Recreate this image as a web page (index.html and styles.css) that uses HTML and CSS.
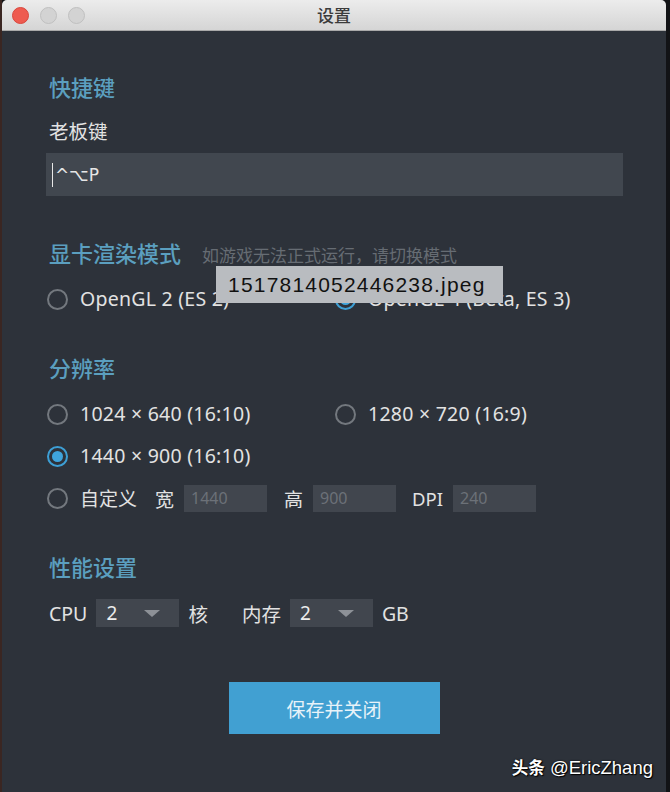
FILE: index.html
```html
<!DOCTYPE html>
<html lang="zh-CN">
<head>
<meta charset="utf-8">
<title>设置</title>
<link rel="stylesheet" href="styles.css">
</head>
<body>
<div class="window">
  <div class="titlebar">
    <div class="lights">
      <span class="light red"></span>
      <span class="light gray"></span>
      <span class="light gray"></span>
    </div>
    <div class="title">设置</div>
    <div></div>
  </div>

  <div class="content">
    <section class="section first">
      <h2 class="section-title">快捷键</h2>
      <div class="field-label">老板键</div>
      <div class="hotkey"><span class="caret"></span><span class="hotkey-text">^⌥P</span></div>
    </section>

    <section class="section render">
      <h2 class="section-title">显卡渲染模式<span class="hint">如游戏无法正式运行，请切换模式</span></h2>
      <div class="radio-grid lead">
        <div class="option"><span class="radio"></span><span class="opt-text">OpenGL 2 (ES 2)</span></div>
        <div class="option"><span class="radio checked"></span><span class="opt-text">OpenGL 4 (Beta, ES 3)</span></div>
      </div>
    </section>

    <section class="section">
      <h2 class="section-title">分辨率</h2>
      <div class="radio-grid lead">
        <div class="option"><span class="radio"></span><span class="opt-text">1024 × 640 (16:10)</span></div>
        <div class="option"><span class="radio"></span><span class="opt-text">1280 × 720 (16:9)</span></div>
      </div>
      <div class="radio-grid">
        <div class="option"><span class="radio checked"></span><span class="opt-text">1440 × 900 (16:10)</span></div>
      </div>
      <div class="custom-row">
        <span class="radio"></span>
        <span class="opt-text cjk">自定义</span>
        <span class="mini-label w">宽</span>
        <span class="num-input">1440</span>
        <span class="mini-label">高</span>
        <span class="num-input">900</span>
        <span class="mini-label dpi">DPI</span>
        <span class="num-input">240</span>
      </div>
    </section>

    <section class="section perf">
      <h2 class="section-title">性能设置</h2>
      <div class="perf-row">
        <span class="perf-label cpu">CPU</span>
        <span class="select"><span class="select-val">2</span><span class="arrow"></span></span>
        <span class="perf-label core">核</span>
        <span class="perf-label mem">内存</span>
        <span class="select"><span class="select-val">2</span><span class="arrow"></span></span>
        <span class="perf-label">GB</span>
      </div>
    </section>

    <div class="actions">
      <button class="save">保存并关闭</button>
    </div>
  </div>

  <div class="tooltip">1517814052446238.jpeg</div>
  <div class="watermark"><b>头条</b> @EricZhang</div>
</div>
</body>
</html>
```

FILE: styles.css
```css
* { box-sizing: border-box; }

html, body {
  margin: 0;
  padding: 0;
}

body {
  width: 670px;
  height: 792px;
  overflow: hidden;
  background: linear-gradient(90deg, #3a2622 0, #3a2622 2px, #121316 2px);
  font-family: "Noto Sans", "Noto Sans CJK SC", sans-serif;
}

.window {
  position: relative;
  margin-left: 2px;
  width: 664px;
  height: 792px;
  background: #2d323a;
  border-radius: 5px 5px 0 0;
  overflow: hidden;
}

.titlebar {
  height: 31px;
  display: grid;
  grid-template-columns: 1fr auto 1fr;
  align-items: center;
  background: linear-gradient(#ececec, #d5d5d5);
  border-bottom: 1px solid #a9a9a9;
}

.lights {
  display: flex;
  gap: 11px;
  padding-left: 10px;
}

.light {
  width: 17px;
  height: 17px;
  border-radius: 50%;
}

.light.red {
  background: #ee5b50;
  border: 1px solid #d9473d;
}

.light.gray {
  background: #d3d3d3;
  border: 1px solid #c0c0c0;
}

.title {
  font-family: "Noto Sans CJK SC", sans-serif;
  font-size: 17px;
  font-weight: 500;
  color: #3b3b3b;
  line-height: 20px;
}

.content {
  padding: 41px 44px 0 44px;
}

.section {
  margin-top: 41px;
}

.section.first {
  margin-top: 0;
}

.section.render {
  margin-top: 42px;
}

.section.perf {
  margin-top: 40px;
}

.section-title {
  margin: 0 0 0 3px;
  height: 28px;
  display: flex;
  align-items: baseline;
  font-family: "Noto Sans CJK SC", sans-serif;
  font-size: 22px;
  line-height: 28px;
  font-weight: 500;
  color: #5b9fbf;
}

.hint {
  margin-left: 21px;
  font-size: 17px;
  line-height: 28px;
  font-weight: 400;
  color: #666c73;
}

.field-label {
  margin: 18px 0 0 3px;
  font-family: "Noto Sans CJK SC", sans-serif;
  font-size: 19.5px;
  line-height: 26px;
  color: #e3e3e3;
}

.hotkey {
  margin-top: 9px;
  width: 577px;
  height: 43px;
  background: #41474f;
  display: flex;
  align-items: center;
  padding-left: 6px;
}

.caret {
  width: 1px;
  height: 24px;
  background: #e8e8e8;
  margin-right: 2px;
}

.hotkey-text {
  font-family: "DejaVu Sans", sans-serif;
  font-size: 17px;
  color: #e6e6e6;
}

.radio-grid {
  display: grid;
  grid-template-columns: 288px 1fr;
  margin-top: 16px;
  height: 26px;
}

.radio-grid.lead {
  margin-top: 20px;
}

.option {
  display: flex;
  align-items: center;
}

.radio {
  flex: none;
  width: 21px;
  height: 21px;
  margin-left: 1px;
  border: 2px solid #73787e;
  border-radius: 50%;
  display: flex;
  align-items: center;
  justify-content: center;
}

.radio.checked {
  border-color: #3d9fd5;
}

.radio.checked::after {
  content: "";
  width: 11px;
  height: 11px;
  border-radius: 50%;
  background: #3fa4dc;
}

.opt-text {
  margin-left: 12px;
  font-size: 19.5px;
  letter-spacing: 0.25px;
  line-height: 26px;
  color: #e2e2e2;
  white-space: nowrap;
}

.opt-text.cjk {
  font-family: "Noto Sans CJK SC", sans-serif;
  font-size: 19px;
  letter-spacing: 0;
}

.custom-row {
  margin-top: 15px;
  display: flex;
  align-items: center;
  height: 28px;
}

.mini-label {
  margin-left: 17px;
  font-family: "Noto Sans CJK SC", sans-serif;
  font-size: 19px;
  color: #e2e2e2;
}

.mini-label.w {
  margin-left: 18px;
}

.mini-label.dpi {
  font-family: "Noto Sans", sans-serif;
  font-size: 18.5px;
  margin-left: 16px;
}

.num-input {
  margin-left: 10px;
  width: 83px;
  height: 27px;
  background: #41464e;
  color: #6c7178;
  font-size: 16px;
  line-height: 27px;
  padding-left: 7px;
}

.perf-row {
  margin-top: 19px;
  display: flex;
  align-items: center;
  height: 28px;
}

.perf-label {
  margin-left: 9px;
  font-size: 19.5px;
  color: #e2e2e2;
  font-family: "Noto Sans", "Noto Sans CJK SC", sans-serif;
}

.perf-label.cpu {
  margin-left: 3px;
}

.perf-label.mem {
  margin-left: 34px;
}

.select {
  margin-left: 9px;
  width: 83px;
  height: 28px;
  background: #41464e;
  display: flex;
  align-items: center;
  padding-left: 10px;
}

.select-val {
  font-size: 19px;
  color: #ececec;
  width: 38px;
}

.arrow {
  width: 0;
  height: 0;
  border-left: 8px solid transparent;
  border-right: 8px solid transparent;
  border-top: 7px solid #8d9197;
}

.actions {
  margin-top: 55px;
  display: flex;
  justify-content: center;
}

.save {
  width: 211px;
  height: 52px;
  border: none;
  background: #41a0d2;
  color: #e8f3f9;
  font-family: "Noto Sans CJK SC", sans-serif;
  font-size: 19px;
  padding: 0;
}

.tooltip {
  position: absolute;
  left: 214px;
  top: 266px;
  width: 287px;
  height: 37px;
  background: #b9bcc0;
  color: #111;
  font-family: "Liberation Sans", Arial, sans-serif;
  font-size: 21px;
  letter-spacing: 1.2px;
  line-height: 37px;
  padding-left: 12px;
}

.watermark {
  position: absolute;
  right: 13px;
  top: 755px;
  font-family: "Liberation Sans", "Noto Sans CJK SC", sans-serif;
  font-size: 18.5px;
  color: #ffffff;
  text-shadow: 1px 1px 1px #000, 0 0 2px #000;
  white-space: nowrap;
}

.watermark b {
  font-family: "Noto Sans CJK SC", sans-serif;
  font-size: 16.5px;
  font-weight: 700;
}
```
